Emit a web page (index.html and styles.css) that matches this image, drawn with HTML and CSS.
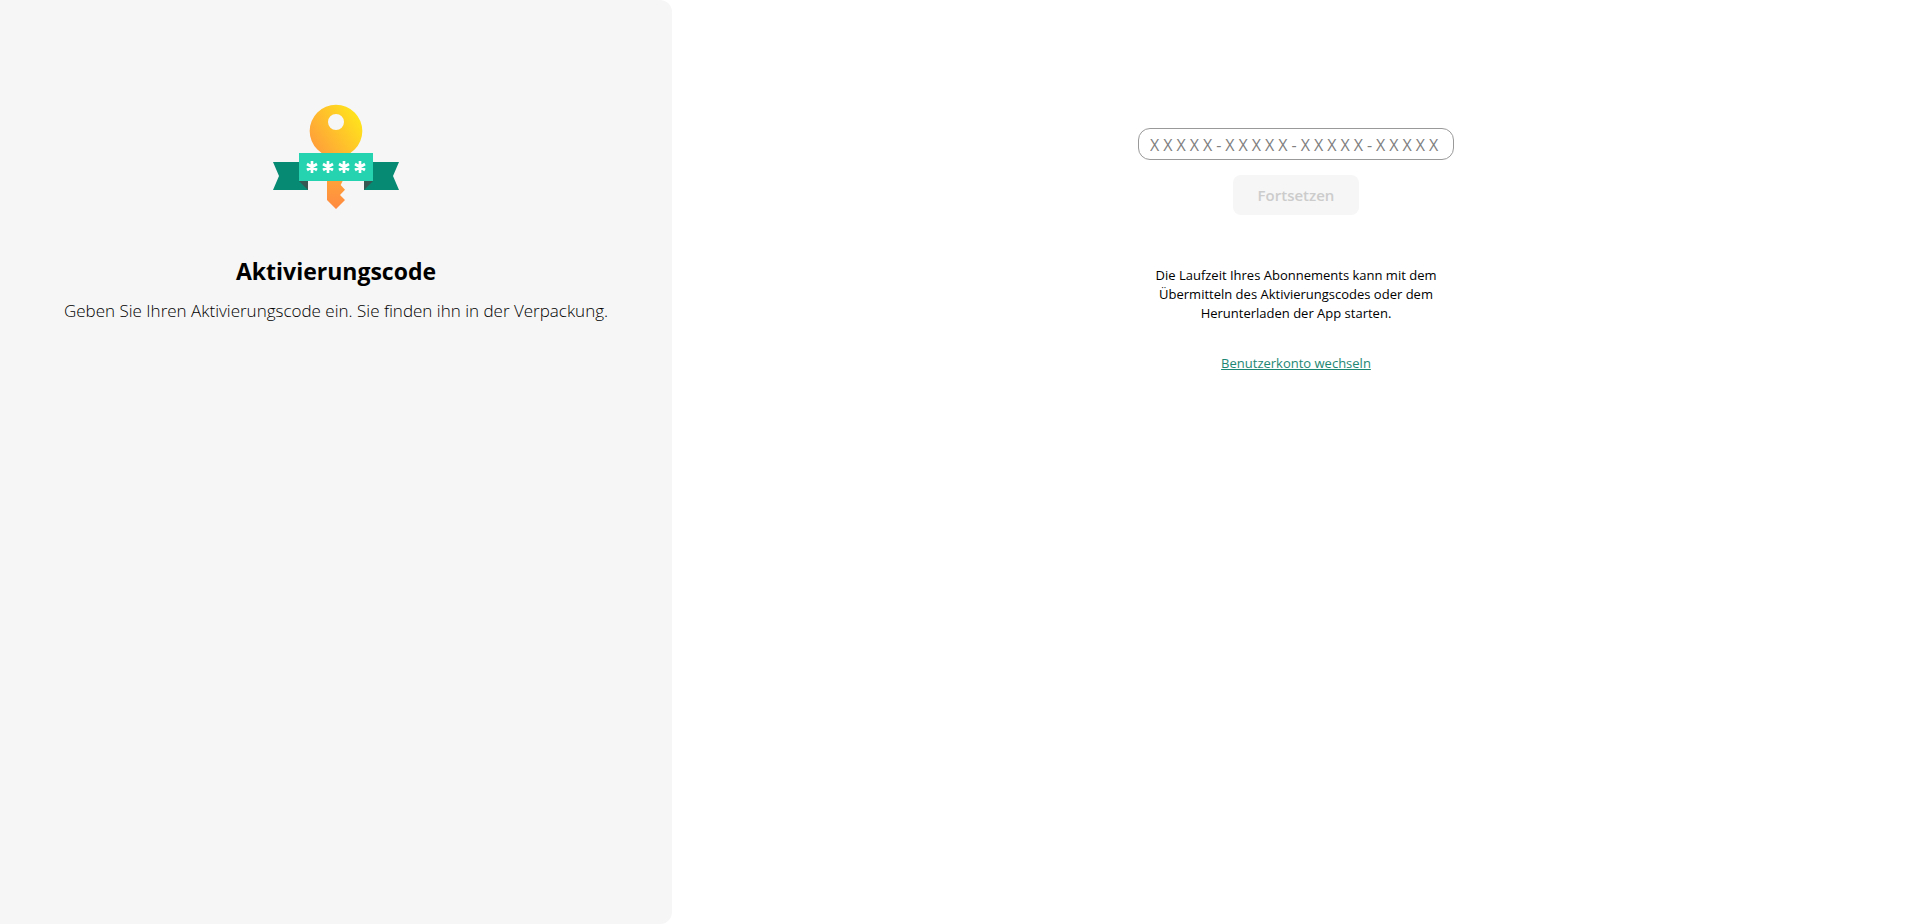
FILE: index.html
```html
<!DOCTYPE html>
<html lang="de">
<head>
<meta charset="utf-8">
<meta name="viewport" content="width=device-width, initial-scale=1">
<title>Aktivierungscode</title>
<link rel="stylesheet" href="styles.css">
</head>
<body>
<main class="page">
  <section class="intro">
    <svg class="intro-icon" viewBox="39 24 378 336" aria-hidden="true">
      <defs>
        <linearGradient id="head" x1="160" y1="155" x2="295" y2="65" gradientUnits="userSpaceOnUse">
          <stop offset="0" stop-color="#ff9f3a"/>
          <stop offset="1" stop-color="#ffe31c"/>
        </linearGradient>
        <linearGradient id="shaft" x1="0" y1="0" x2="0" y2="1">
          <stop offset="0" stop-color="#ffa338"/>
          <stop offset="1" stop-color="#ff8a42"/>
        </linearGradient>
      </defs>
      <path fill="url(#head)" fill-rule="evenodd" d="M228 29a79 79 0 1 1 0 158a79 79 0 1 1 0-158zM228 57a24 24 0 1 0 0 48a24 24 0 1 0 0-48z"/>
      <path fill="url(#shaft)" d="M201 250H252L242 270L255 284L240 300L255 315L228 342L201 315z"/>
      <path fill="#068a74" d="M39 201H144V285H39L57 243zM417 201H312V285H417L399 243z"/>
      <path fill="#375753" d="M117 258H144V285zM339 258H312V285z"/>
      <path fill="#25d3b0" d="M117 174H339V258H117z"/>
      <path stroke="#fff" stroke-width="8" d="M156 198V234M141 207L171 225M171 207L141 225M204 198V234M189 207L219 225M219 207L189 225M252 198V234M237 207L267 225M267 207L237 225M300 198V234M285 207L315 225M315 207L285 225"/>
    </svg>
    <h1 class="intro-title">Aktivierungscode</h1>
    <p class="intro-text">Geben Sie Ihren Aktivierungscode ein. Sie finden ihn in der Verpackung.</p>
  </section>
  <section class="activation">
    <form class="activation-form">
      <input class="code-input" type="text" aria-label="Aktivierungscode" placeholder="XXXXX-XXXXX-XXXXX-XXXXX">
      <button class="submit" type="submit" disabled>Fortsetzen</button>
    </form>
    <p class="notice">Die Laufzeit Ihres Abonnements kann mit dem Übermitteln des Aktivierungscodes oder dem Herunterladen der App starten.</p>
    <a class="switch-link" href="#">Benutzerkonto wechseln</a>
  </section>
</main>
</body>
</html>
```

FILE: styles.css
```css
* {
  box-sizing: border-box;
}

body {
  margin: 0;
  background: #fff;
  color: #000;
  font-family: "Segoe UI", "Open Sans", "Noto Sans", sans-serif;
}

.page {
  display: grid;
  grid-template-columns: 35% 1fr;
  min-height: 100vh;
}

.intro {
  display: flex;
  flex-direction: column;
  align-items: center;
  padding: 103px 24px 24px;
  border-radius: 0 12px 12px 0;
  background: #f6f6f6;
  text-align: center;
}

.intro-icon {
  width: 126px;
  height: 112px;
}

.intro-title {
  margin: 40px 0 8px;
  font-size: 23px;
  line-height: 32px;
  font-weight: 700;
}

.intro-text {
  margin: 0;
  font-size: 17px;
  line-height: 32px;
  font-weight: 300;
}

.activation {
  display: flex;
  flex-direction: column;
  align-items: center;
  padding: 128px 24px 24px;
}

.activation-form {
  display: flex;
  flex-direction: column;
  align-items: center;
  gap: 15px;
}

.code-input {
  width: 316px;
  height: 32px;
  padding: 2px 10px 0 11px;
  border: 1px solid #999;
  border-radius: 12px;
  background: #fff;
  font-family: inherit;
  font-size: 16px;
  letter-spacing: 4px;
}

.code-input::placeholder {
  color: #808080;
  opacity: 1;
}

.submit {
  min-width: 126px;
  height: 40px;
  padding: 0 24px;
  border: 0;
  border-radius: 8px;
  background: #f6f6f6;
  color: #ccc;
  font-family: inherit;
  font-size: 15px;
  font-weight: 600;
}

.notice {
  width: 316px;
  margin: 51px 0 30px;
  padding: 0 12px;
  font-size: 13px;
  line-height: 19px;
  text-align: center;
}

.switch-link {
  color: #1d8774;
  font-size: 13px;
  line-height: 20px;
}
```
